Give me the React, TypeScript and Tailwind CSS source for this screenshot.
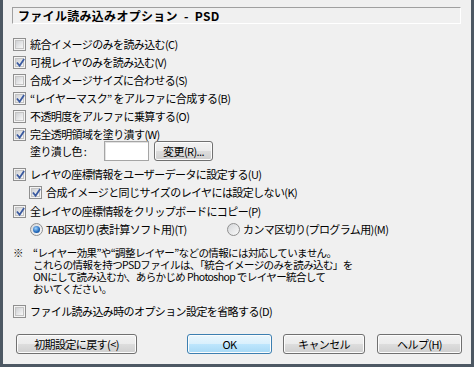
import React from 'react';

const font = { fontFamily: '"Noto Sans CJK JP", "Noto Sans", sans-serif' };

const CheckMark: React.FC = () => (
    <svg className="absolute left-[1px] top-[1px]" width="11" height="11" viewBox="0 0 11 11">
        <path d="M2.5 5.2 L4.6 7.8 L8.6 1.8" fill="none" stroke="#3a5aa0" strokeWidth="1.8" strokeLinecap="square" />
    </svg>
);

const Box: React.FC<{ checked?: boolean }> = ({ checked }) => (
    <span className="relative w-[13px] h-[13px] shrink-0 border border-[#8f8f8f] bg-[#f4f4f4] p-[1px] flex">
        <span className="flex-1 border border-[#c4c4c4] bg-[linear-gradient(135deg,#cfd1d4,#f8f8f8)]" />
        {checked && <CheckMark />}
    </span>
);

const Check: React.FC<{ label: string; checked?: boolean; indent?: boolean; className?: string }> = ({
    label,
    checked,
    indent,
    className = '',
}) => (
    <div className={`h-[18px] flex items-center gap-[4px] ${indent ? 'pl-[16px]' : ''} ${className}`}>
        <Box checked={checked} />
        <span className="whitespace-nowrap">{label}</span>
    </div>
);

const Radio: React.FC<{ label: string; on?: boolean }> = ({ label, on }) => (
    <div className="flex items-center gap-[3px]">
        <span className="w-[13px] h-[13px] rounded-full border border-[#8f8f8f] bg-[linear-gradient(135deg,#d4d6d9,#fafafa)] flex items-center justify-center">
            {on && (
                <span className="w-[7px] h-[7px] rounded-full bg-[radial-gradient(circle_at_40%_35%,#9fd4ff,#1f66b8_60%,#0d3f86)]" />
            )}
        </span>
        <span className="whitespace-nowrap">{label}</span>
    </div>
);

const Button: React.FC<{ label: string; primary?: boolean; className?: string }> = ({ label, primary, className = '' }) => (
    <div
        className={`h-[20px] rounded-[3px] border flex items-center justify-center shadow-[inset_0_0_0_1px_#fcfcfc] ${
            primary
                ? 'border-[#3c7fb1] bg-[linear-gradient(#eaf6fd,#d9f0fc_50%,#bee6fd_50%,#a7d9f5)]'
                : 'border-[#707070] bg-[linear-gradient(#f2f2f2,#ebebeb_50%,#dddddd_50%,#cfcfcf)]'
        } ${className}`}
    >
        {label}
    </div>
);

const App: React.FC = () => {
    return (
        <div
            style={font}
            className="w-[474px] h-[367px] bg-[#f0f0f0] border-x-[3px] border-b-[3px] border-[#4d5863] text-[11px] leading-[14px] tracking-[-0.6px] text-black overflow-hidden"
        >
            <div className="mt-[7px] ml-[9px] w-[449px] h-[17px] border-t border-l border-t-[#a0a0a0] border-l-[#a0a0a0] border-b border-r border-b-white border-r-white flex items-center pl-[5px] font-bold text-[12px] tracking-[0.3px] whitespace-pre">
                ファイル読み込みオプション  -  PSD
            </div>

            <div className="pl-[10px] mt-[11px]">
                <Check label="統合イメージのみを読み込む(C)" />
                <Check label="可視レイヤのみを読み込む(V)" checked />
                <Check label="合成イメージサイズに合わせる(S)" />
                <Check label="“レイヤーマスク” をアルファに合成する(B)" checked />
                <Check label="不透明度をアルファに乗算する(O)" />
                <Check label="完全透明領域を塗り潰す(W)" checked />

                <div className="h-[20px] -mt-[2px] flex items-center pl-[17px]">
                    <span className="w-[74px] whitespace-pre">塗り潰し色 :</span>
                    <span className="w-[45px] h-[20px] border border-[#a5a5a5] bg-white shadow-[inset_1px_1px_0_#e2e2e2]" />
                    <Button label="変更(R)..." className="ml-[5px] w-[59px]" />
                </div>

                <Check label="レイヤの座標情報をユーザーデータに設定する(U)" checked className="mt-[4px]" />
                <Check label="合成イメージと同じサイズのレイヤには設定しない(K)" checked indent />
                <Check label="全レイヤの座標情報をクリップボードにコピー(P)" checked className="mt-[1px]" />
                <div className="h-[18px] flex items-center pl-[17px]">
                    <div className="w-[197px]">
                        <Radio label="TAB区切り(表計算ソフト用)(T)" on />
                    </div>
                    <Radio label="カンマ区切り(プログラム用)(M)" />
                </div>

                <div className="mt-[9px] flex text-[10.5px] leading-[12px]">
                    <span className="w-[20px] shrink-0">※</span>
                    <div>
                        <div>“レイヤー効果”や“調整レイヤー”などの情報には対応していません。</div>
                        <div>これらの情報を持つPSDファイルは、「統合イメージのみを読み込む」を</div>
                        <div>ONにして読み込むか、あらかじめ Photoshop でレイヤー統合して</div>
                        <div>おいてください。</div>
                    </div>
                </div>

                <Check label="ファイル読み込み時のオプション設定を省略する(D)" className="mt-[7px]" />
            </div>

            <div className="mt-[14px] pl-[13px] flex">
                <Button label="初期設定に戻す(<)" className="w-[121px]" />
                <Button label="OK" primary className="ml-[50px] w-[85px]" />
                <Button label="キャンセル" className="ml-[11px] w-[82px]" />
                <Button label="ヘルプ(H)" className="ml-[12px] w-[85px]" />
            </div>
        </div>
    );
};

export default App;
